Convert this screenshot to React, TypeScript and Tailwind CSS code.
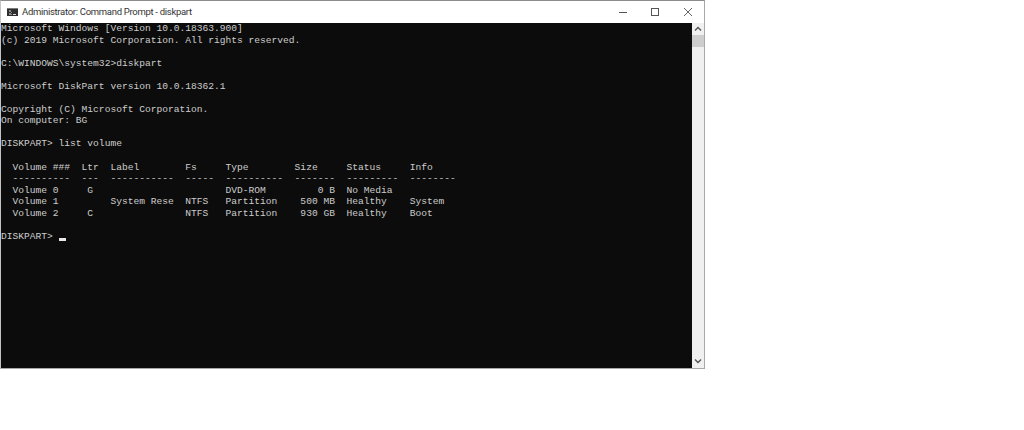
const LINES = [
  'Microsoft Windows [Version 10.0.18363.900]',
  '(c) 2019 Microsoft Corporation. All rights reserved.',
  '',
  'C:\\WINDOWS\\system32>diskpart',
  '',
  'Microsoft DiskPart version 10.0.18362.1',
  '',
  'Copyright (C) Microsoft Corporation.',
  'On computer: BG',
  '',
  'DISKPART> list volume',
  '',
  '  Volume ###  Ltr  Label        Fs     Type        Size     Status     Info',
  '  ----------  ---  -----------  -----  ----------  -------  ---------  --------',
  '  Volume 0     G                       DVD-ROM         0 B  No Media',
  '  Volume 1         System Rese  NTFS   Partition    500 MB  Healthy    System',
  '  Volume 2     C                NTFS   Partition    930 GB  Healthy    Boot',
  '',
]

function CmdIcon() {
  return (
    <svg width="11" height="8" viewBox="0 0 11 8" className="ml-[6px] mr-[4px]">
      <rect width="11" height="8" fill="#2e2e2e" />
      <rect x="0" y="0" width="11" height="1" fill="#7a7a7a" />
      <path d="M2 3h2M2 6h2M4.5 4v.5M4.5 6v.5M6 6.5h3" stroke="#e0e0e0" strokeWidth="1" fill="none" />
    </svg>
  )
}

export default function App() {
  return (
    <div className="w-[1024px] h-[430px] bg-white overflow-hidden">
      <div className="w-[705px] h-[369px] flex flex-col border-t border-t-[#8c8c8c] border-r border-r-[#a8a8a8] border-b border-b-[#a8a8a8] border-l border-l-[#c4c4c4]">
        <div className="h-[22px] flex items-center bg-white shrink-0">
          <CmdIcon />
          <span className="text-[9.5px] text-[#333333] font-['Roboto',sans-serif] tracking-[-0.3px]">
            Administrator: Command Prompt - diskpart
          </span>
          <div className="ml-auto flex items-center">
            <svg width="8" height="8" viewBox="0 0 8 8" className="mr-[24px]">
              <path d="M0 4.5h8" stroke="#555555" strokeWidth="1" />
            </svg>
            <svg width="8" height="8" viewBox="0 0 8 8" className="mr-[25px]">
              <rect x="0.5" y="0.5" width="7" height="7" fill="none" stroke="#555555" strokeWidth="1" />
            </svg>
            <svg width="8" height="8" viewBox="0 0 8 8" className="mr-[12px]">
              <path d="M0 0l8 8M8 0l-8 8" stroke="#555555" strokeWidth="0.9" />
            </svg>
          </div>
        </div>
        <div className="flex-1 flex min-h-0">
          <div className="flex-1 bg-[#0c0c0c] text-[#cccccc] font-['Liberation_Mono',monospace] text-[9.6px] overflow-hidden">
            {LINES.map((line, i) => (
              <div key={i} className="h-[11.56px] leading-[11.56px] whitespace-pre">
                {line}
              </div>
            ))}
            <div className="h-[11.56px] leading-[11.56px] whitespace-pre flex">
              <span>DISKPART&gt; </span>
              <span className="w-[7px] h-[3px] bg-[#e8e8e8] self-end mb-[1px]" />
            </div>
          </div>
          <div className="w-[12px] bg-[#f0f0f0] flex flex-col shrink-0">
            <div className="h-[12px] flex items-center justify-center">
              <svg width="8" height="6" viewBox="0 0 8 6">
                <path d="M1 4.5l3-3 3 3" stroke="#555555" strokeWidth="1.4" fill="none" />
              </svg>
            </div>
            <div className="h-[12px] bg-[#cdcdcd]" />
            <div className="mt-auto h-[15px] flex items-center justify-center">
              <svg width="8" height="6" viewBox="0 0 8 6">
                <path d="M1 1.5l3 3 3-3" stroke="#555555" strokeWidth="1.4" fill="none" />
              </svg>
            </div>
          </div>
        </div>
      </div>
    </div>
  )
}
